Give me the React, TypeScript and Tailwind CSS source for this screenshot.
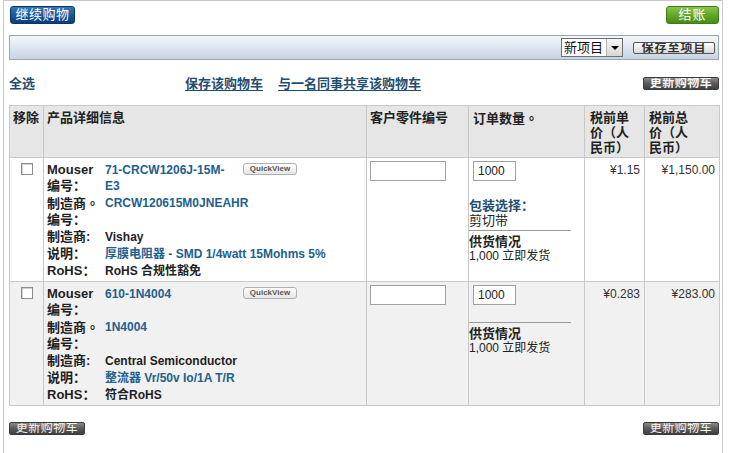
import React from 'react'

type Item = {
  mouser: React.ReactNode
  mfrNo: string
  mfr: string
  desc: React.ReactNode
  rohs: string
  unit: string
  total: string
  packaging?: string
}

const items: Item[] = [
  {
    mouser: (
      <>
        71-CRCW1206J-15M-
        <br />
        E3
      </>
    ),
    mfrNo: 'CRCW120615M0JNEAHR',
    mfr: 'Vishay',
    desc: <>厚膜电阻器 - SMD 1/4watt 15Mohms 5%</>,
    rohs: 'RoHS 合规性豁免',
    unit: '¥1.15',
    total: '¥1,150.00',
    packaging: '剪切带',
  },
  {
    mouser: '610-1N4004',
    mfrNo: '1N4004',
    mfr: 'Central Semiconductor',
    desc: <>整流器 Vr/50v Io/1A T/R</>,
    rohs: '符合RoHS',
    unit: '¥0.283',
    total: '¥283.00',
  },
]

// small grey "update cart" button used three times
function UpdateButton() {
  return (
    <button className="w-[76px] h-[13px] rounded-[2px] border border-[#3a3a3a] bg-gradient-to-b from-[#8a8a8a] via-[#5a5a5a] to-[#3f3f3f] text-[#f4f4f4] text-[12px] leading-[11px] tracking-[0.5px] overflow-hidden">
      更新购物车
    </button>
  )
}

function QuickView() {
  return (
    <div className="w-[54px] h-[12px] rounded-[3px] border border-[#b0b0b0] bg-gradient-to-b from-white to-[#e6e6e6] text-[8px] leading-[10px] font-bold text-[#555] text-center">
      QuickView
    </div>
  )
}

function Check() {
  return <div className="w-[12px] h-[12px] border border-[#8c8c8c] bg-white shadow-[inset_1px_1px_0_#d0d0d0]" />
}

const label = 'font-bold text-[13px] text-[#222]'
const blue = 'font-bold text-[12px] text-[#22608f]'
const black = 'font-bold text-[12px] text-[#222]'

function Row({ item, alt }: { item: Item; alt?: boolean }) {
  return (
    <tr className={alt ? 'h-[124px] align-top bg-[#f1f1f1]' : 'h-[124px] align-top bg-white'}>
      <td className="border border-[#c8c8c8] pl-[11px] pt-[5px]">
        <Check />
      </td>
      <td className="border border-[#c8c8c8] pl-[3px] pt-[4px]">
        <div className="grid grid-cols-[58px_138px_1fr] gap-y-[1px] leading-[16px]">
          <div className={label}>
            Mouser
            <br />
            编号：
          </div>
          <div className={blue}>{item.mouser}</div>
          <div className="pt-[1px]">
            <QuickView />
          </div>
          <div className={label}>
            制造商<span className="font-['Noto_Sans_CJK_TC',sans-serif]">。</span>
            <br />
            编号：
          </div>
          <div className={`col-span-2 ${blue}`}>{item.mfrNo}</div>
          <div className={label}>制造商:</div>
          <div className={`col-span-2 ${black}`}>{item.mfr}</div>
          <div className={label}>说明：</div>
          <div className={`col-span-2 ${blue}`}>{item.desc}</div>
          <div className={label}>RoHS：</div>
          <div className={`col-span-2 ${black}`}>{item.rohs}</div>
        </div>
      </td>
      <td className="border border-[#c8c8c8] pl-[3px] pt-[3px]">
        <div className="w-[76px] h-[20px] border border-[#a0a0a0] bg-white" />
      </td>
      <td className="border border-[#c8c8c8] pt-[3px]">
        <div className="ml-[4px] w-[43px] h-[20px] border border-[#a0a0a0] bg-white text-[12px] leading-[18px] pl-[4px] text-[#222]">
          1000
        </div>
        <div className="mt-[17px] w-[102px] text-[13px] leading-[15px] text-[#222]">
          {item.packaging && (
            <div className="pb-[2px]">
              <div className="font-bold text-[#1f4e70]">包装选择：</div>
              <div>{item.packaging}</div>
            </div>
          )}
          <div className="border-t border-[#9a9a9a] pt-[3px]">
            <div className="font-bold">供货情况</div>
            <div className="text-[12px]">1,000 立即发货</div>
          </div>
        </div>
      </td>
      <td className="border border-[#c8c8c8] pr-[4px] pt-[4px] text-right text-[12px] leading-[16px] text-[#333]">
        {item.unit}
      </td>
      <td className="border border-[#c8c8c8] pr-[4px] pt-[4px] text-right text-[12px] leading-[16px] text-[#333]">
        {item.total}
      </td>
    </tr>
  )
}

export default function App() {
  return (
    <div className="w-[730px] h-[453px] bg-white font-['Liberation_Sans','Noto_Sans_CJK_SC',sans-serif] overflow-hidden">
      <div className="ml-[3px] w-[720px] border border-[#c8c8c8] pl-[5px] pr-[3px] pt-[5px] pb-[18px]">
        {/* top buttons */}
        <div className="flex justify-between">
          <button className="ml-[1px] w-[65px] h-[18px] rounded-[3px] border border-[#0c3563] bg-gradient-to-b from-[#3577b8] via-[#1b5a9a] to-[#0b3e76] text-white text-[13px] leading-[16px] tracking-[0.5px]">
            继续购物
          </button>
          <button className="w-[53px] h-[18px] rounded-[3px] border border-[#3f7d14] bg-gradient-to-b from-[#86c64a] via-[#62a82a] to-[#448c14] text-white text-[13px] leading-[16px] tracking-[1px]">
            结账
          </button>
        </div>

        {/* project bar */}
        <div className="mt-[11px] h-[25px] border border-[#9aa6b2] bg-gradient-to-b from-[#f4f7fa] to-[#c6d5e3] flex items-center justify-end pr-[3px] gap-[10px]">
          <div className="w-[62px] h-[19px] border border-[#6f6f6f] bg-white flex">
            <div className="flex-1 text-[13px] leading-[17px] pl-[2px] text-[#111]">新项目</div>
            <div className="w-[16px] border-l border-[#b5b5b5] bg-gradient-to-b from-[#f6f6f6] to-[#d8d8d8] flex items-center justify-center">
              <div className="w-0 h-0 border-l-[4px] border-r-[4px] border-t-[4px] border-l-transparent border-r-transparent border-t-black" />
            </div>
          </div>
          <button className="w-[82px] h-[12px] rounded-[2px] border border-[#555] bg-gradient-to-b from-white to-[#d9d9d9] text-[12px] leading-[11px] font-bold tracking-[1px] text-[#333] overflow-hidden">
            保存至项目
          </button>
        </div>

        {/* links row */}
        <div className="mt-[16px] h-[16px] flex items-center text-[13px] font-bold text-[#1f4e70]">
          <span>全选</span>
          <span className="ml-[150px] underline underline-offset-2">保存该购物车</span>
          <span className="ml-[15px] underline underline-offset-2">与一名同事共享该购物车</span>
          <div className="ml-auto -mt-[3px]">
            <UpdateButton />
          </div>
        </div>

        {/* cart table */}
        <table className="mt-[13px] w-[710px] table-fixed border-collapse">
          <colgroup>
            <col className="w-[34px]" />
            <col className="w-[323px]" />
            <col className="w-[102px]" />
            <col className="w-[116px]" />
            <col className="w-[60px]" />
            <col className="w-[75px]" />
          </colgroup>
          <thead>
            <tr className="h-[52px] align-top bg-[#e6e6e6] text-left text-[13px] leading-[15px] font-bold text-[#222]">
              <th className="border border-[#c8c8c8] pl-[3px] pt-[4px]">移除</th>
              <th className="border border-[#c8c8c8] pl-[3px] pt-[4px]">产品详细信息</th>
              <th className="border border-[#c8c8c8] pl-[3px] pt-[4px]">客户零件编号</th>
              <th className="border border-[#c8c8c8] pl-[4px] pt-[4px]">
                订单数量<span className="font-['Noto_Sans_CJK_TC',sans-serif]">。</span>
              </th>
              <th className="border border-[#c8c8c8] pl-[5px] pt-[4px]">
                税前单
                <br />
                价（人
                <br />
                民币）
              </th>
              <th className="border border-[#c8c8c8] pl-[4px] pt-[4px]">
                税前总
                <br />
                价（人
                <br />
                民币）
              </th>
            </tr>
          </thead>
          <tbody>
            {items.map((item, i) => (
              <Row key={i} item={item} alt={i % 2 === 1} />
            ))}
          </tbody>
        </table>

        {/* bottom buttons */}
        <div className="mt-[16px] flex justify-between">
          <UpdateButton />
          <UpdateButton />
        </div>
      </div>
    </div>
  )
}
